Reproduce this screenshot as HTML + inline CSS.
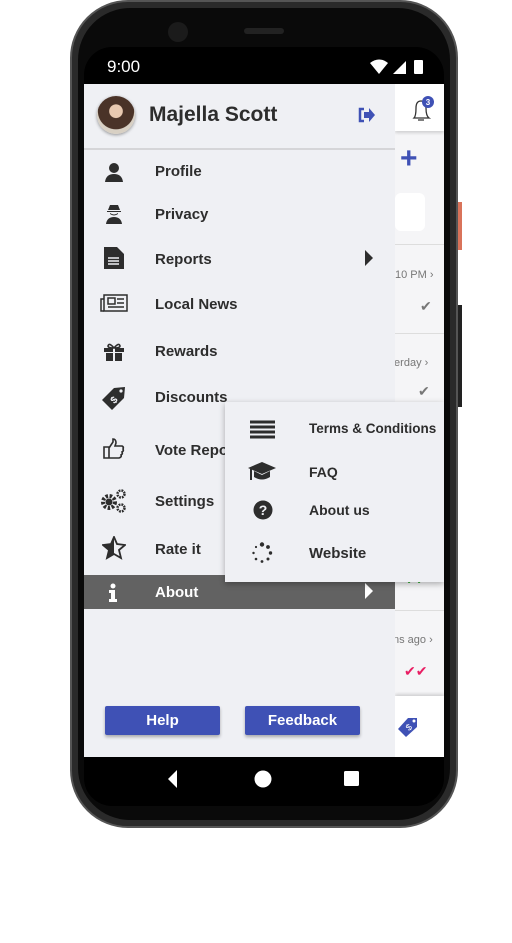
<!DOCTYPE html>
<html><head><style>
*{margin:0;padding:0;box-sizing:border-box}
body{width:512px;height:943px;background:#fff;position:relative;overflow:hidden;font-family:"Liberation Sans",sans-serif}
.abs{position:absolute}
.phone{left:70px;top:0;width:388px;height:828px;border-radius:58px;background:#2a2a2a;border:2px solid #555}
.inner{left:78px;top:8px;width:372px;height:812px;border-radius:52px;background:#0a0a0a}
.screen{left:84px;top:47px;width:360px;height:759px;background:#000;border-radius:28px;overflow:hidden}
.drawer{left:84px;top:84px;width:311px;height:673px;background:#eff0f4}
.item{position:absolute;left:0;width:311px;font-weight:bold;font-size:15px;color:#2d2d2d}
.item span{position:absolute;left:71px;top:2px}
.ic{position:absolute;left:16px}
.sub{left:225px;top:402px;width:219px;height:180px;background:#eff0f4;box-shadow:0 2px 6px rgba(0,0,0,.3)}
.sub div{position:absolute;left:84px;font-weight:bold;font-size:14px;color:#2d2d2d}
.btn{position:absolute;top:706px;width:115px;height:29px;background:#3f51b5;color:#fff;font-weight:bold;font-size:15px;text-align:center;line-height:29px;border-radius:2px;box-shadow:0 2px 3px rgba(0,0,0,.3)}
</style></head><body>
<div class="abs phone"></div>
<div class="abs inner"></div>
<div class="abs" style="left:458px;top:202px;width:4px;height:48px;background:#d9735a"></div>
<div class="abs" style="left:458px;top:305px;width:4px;height:102px;background:#222"></div>
<div class="abs" style="left:168px;top:22px;width:20px;height:20px;border-radius:50%;background:#1b1b1b"></div>
<div class="abs" style="left:244px;top:28px;width:40px;height:6px;border-radius:3px;background:#222"></div>
<div class="abs screen"></div>
<div class="abs" style="left:107px;top:57px;color:#fff;font-size:17px">9:00</div>
<svg class="abs" style="left:370px;top:58px" width="58" height="18"><path d="M0 5 Q9 -2 18 5 L9 16Z" fill="#fff"/><path d="M23 16 L36 3 L36 16Z" fill="#fff"/><rect x="44" y="2" width="9" height="14" rx="1" fill="#fff"/></svg>
<div class="abs" style="left:395px;top:84px;width:49px;height:673px;background:#f5f5f7"></div>
<div class="abs" style="left:395px;top:84px;width:49px;height:47px;background:#fff;box-shadow:0 2px 3px rgba(0,0,0,.15)"></div>
<svg class="abs" style="left:408px;top:96px" width="30" height="26"><path d="M6 22 Q8 20 8 12 Q8 5 13 5 Q18 5 18 12 Q18 20 21 22Z M10 24 L16 24" fill="none" stroke="#333" stroke-width="1.3"/><circle cx="20" cy="6" r="6" fill="#3f51b5"/><text x="20" y="9" font-size="8" fill="#fff" text-anchor="middle" font-weight="bold" font-family="Liberation Sans">3</text></svg>
<div class="abs" style="left:400px;top:144px;color:#3f51b5;font-size:30px;font-weight:bold;line-height:30px">+</div>
<div class="abs" style="left:395px;top:193px;width:30px;height:38px;background:#fff;border-radius:6px"></div>
<div class="abs" style="left:395px;top:244px;width:49px;height:1px;background:#ddd"></div>
<div class="abs" style="left:395px;top:269px;font-size:11px;color:#777">10 PM ›</div>
<div class="abs" style="left:420px;top:298px;font-size:14px;color:#777">✔</div>
<div class="abs" style="left:395px;top:333px;width:49px;height:1px;background:#ddd"></div>
<div class="abs" style="left:391px;top:357px;font-size:11px;color:#777">terday ›</div>
<div class="abs" style="left:418px;top:383px;font-size:14px;color:#777">✔</div>
<div class="abs" style="left:406px;top:573px;font-size:12px;color:#2a2">✔✔</div>
<div class="abs" style="left:395px;top:610px;width:49px;height:1px;background:#ddd"></div>
<div class="abs" style="left:393px;top:634px;font-size:11px;color:#777">ns ago ›</div>
<div class="abs" style="left:404px;top:663px;font-size:14px;color:#e91e63">✔✔</div>
<div class="abs" style="left:395px;top:696px;width:49px;height:61px;background:#fff;box-shadow:0 -2px 3px rgba(0,0,0,.15)"></div>
<svg class="abs" style="left:396px;top:715px" width="24" height="24"><path d="M2 14 L12 3 L21 3 L21 12 L10 22Z" fill="#3f51b5"/><circle cx="18" cy="6" r="1.5" fill="#fff"/><text x="11" y="17" font-size="9" fill="#fff" font-family="Liberation Sans" transform="rotate(-40 11 14)">$</text></svg>
<div class="abs drawer"></div>
<div class="abs" style="left:97px;top:96px;width:38px;height:38px;border-radius:50%;background:radial-gradient(circle at 50% 40%,#e8c9b0 0 22%,#4a3328 24% 60%,#d8d0c4 62%);box-shadow:0 1px 3px rgba(0,0,0,.4)"></div>
<div class="abs" style="left:149px;top:103px;font-size:21px;font-weight:bold;color:#2d2d2d">Majella Scott</div>
<svg class="abs" style="left:358px;top:107px" width="18" height="16"><path d="M6 2 H2 V14 H6" fill="none" stroke="#3f51b5" stroke-width="2.5"/><path d="M6 5 H11 V1 L17 8 L11 15 V11 H6Z" fill="#3f51b5"/></svg>
<div class="abs" style="left:84px;top:148px;width:311px;height:2px;background:#d5d5d8"></div>
<div class="abs" style="left:84px;top:0;width:311px;height:0">
<div class="item" style="top:161px"><svg class="ic" style="left:20px;top:1px" width="20" height="20"><circle cx="10" cy="6" r="5" fill="#2d2d2d"/><path d="M1 20 Q2 12 10 12 Q18 12 19 20Z" fill="#2d2d2d"/></svg><span>Profile</span></div>
<div class="item" style="top:204px"><svg class="ic" style="left:20px;top:0" width="20" height="20"><path d="M4 6 L6 1 L14 1 L16 6Z M3 7 H17 V8 H3Z M6 9 Q10 12 14 9 V10 Q10 13 6 10Z M2 20 Q3 13 10 13 Q17 13 18 20Z" fill="#2d2d2d"/></svg><span>Privacy</span></div>
<div class="item" style="top:249px"><svg class="ic" style="left:19px;top:-3px" width="22" height="24"><path d="M1 1 H14 L21 8 V23 H1Z" fill="#2d2d2d"/><path d="M5 12 H16 M5 15 H16 M5 18 H16" stroke="#eff0f4" stroke-width="1.4"/></svg><span>Reports</span><svg class="abs" style="left:280px;top:1px" width="10" height="16"><path d="M1 0 L9 8 L1 16Z" fill="#2d2d2d"/></svg></div>
<div class="item" style="top:294px"><svg class="ic" style="top:-1px" width="28" height="20"><rect x="4" y="2" width="23" height="16" fill="none" stroke="#2d2d2d" stroke-width="1.5"/><path d="M4 6 H1 V18 H4" fill="none" stroke="#2d2d2d" stroke-width="1.5"/><rect x="8" y="5" width="7" height="6" fill="none" stroke="#2d2d2d" stroke-width="1.5"/><path d="M17 6 H24 M17 10 H24 M8 14 H24" stroke="#2d2d2d" stroke-width="1.5"/></svg><span>Local News</span></div>
<div class="item" style="top:341px"><svg class="ic" style="left:19px;top:1px" width="22" height="20"><path d="M1 6 H21 V10 H1Z M3 11 H19 V19 H3Z" fill="#2d2d2d"/><path d="M11 6 V19" stroke="#eff0f4" stroke-width="2"/><path d="M11 6 Q6 0 5 4 Q5 6 11 6 Q16 0 17 4 Q17 6 11 6" fill="none" stroke="#2d2d2d" stroke-width="1.6"/></svg><span>Rewards</span></div>
<div class="item" style="top:387px"><svg class="ic" style="left:17px;top:-2px" width="26" height="26"><path d="M1 15 L13 3 L24 2 L23 13 L11 25Z" fill="#2d2d2d"/><circle cx="20" cy="6" r="1.6" fill="#eff0f4"/><text x="10" y="19" font-size="10" fill="#eff0f4" font-family="Liberation Sans" transform="rotate(-45 12 15)">$</text></svg><span>Discounts</span></div>
<div class="item" style="top:440px"><svg class="ic" style="left:19px;top:-2px" width="22" height="22"><path d="M1 9 H6 V20 H1Z M6 10 L10 4 V1 Q13 1 13 5 L12 8 H19 Q21 9 20 11 Q21 13 19 14 Q20 16 18 17 Q19 19 16 20 H6" fill="none" stroke="#2d2d2d" stroke-width="1.6"/></svg><span>Vote Repo</span></div>
<div class="item" style="top:491px"><svg class="ic" style="top:-3px" width="28" height="26"><circle cx="9" cy="14" r="6" fill="none" stroke="#2d2d2d" stroke-width="4" stroke-dasharray="2.5 1.6"/><circle cx="9" cy="14" r="3.5" fill="#2d2d2d"/><circle cx="21" cy="6" r="3.5" fill="none" stroke="#2d2d2d" stroke-width="2.5" stroke-dasharray="1.8 1"/><circle cx="21" cy="20" r="3.5" fill="none" stroke="#2d2d2d" stroke-width="2.5" stroke-dasharray="1.8 1"/></svg><span>Settings</span></div>
<div class="item" style="top:539px"><svg class="ic" style="left:18px;top:-3px" width="24" height="24"><path d="M12 1 L15 8 L23 9 L17 14 L19 22 L12 18 L5 22 L7 14 L1 9 L9 8Z" fill="none" stroke="#2d2d2d" stroke-width="1.8"/><path d="M12 1 L9 8 L1 9 L7 14 L5 22 L12 18Z" fill="#2d2d2d"/></svg><span>Rate it</span></div>
<div style="position:absolute;left:0;top:575px;width:311px;height:34px;background:#626262"></div>
<div class="item" style="top:582px;color:#fff"><svg class="ic" style="left:24px;top:1px" width="12" height="20"><circle cx="5" cy="3" r="2.5" fill="#fff"/><path d="M1 7 H7 V16 H9 V19 H1 V16 H3 V10 H1Z" fill="#fff"/></svg><span>About</span><svg class="abs" style="left:280px;top:1px" width="10" height="16"><path d="M1 0 L9 8 L1 16Z" fill="#fff"/></svg></div>
</div>
<div class="btn" style="left:105px">Help</div>
<div class="btn" style="left:245px">Feedback</div>
<div class="abs sub">
<svg class="abs" style="left:25px;top:18px" width="25" height="19"><path d="M0 2 H25 M0 7 H25 M0 12 H25 M0 17 H25" stroke="#2d2d2d" stroke-width="3"/></svg>
<div style="top:19px;font-size:13.5px">Terms &amp; Conditions</div>
<svg class="abs" style="left:22px;top:59px" width="30" height="22"><path d="M15 1 L29 7 L15 13 L1 7Z" fill="#2d2d2d"/><path d="M7 10 V16 Q15 21 23 16 V10 L15 14Z" fill="#2d2d2d"/><path d="M4 8 V19" stroke="#2d2d2d" stroke-width="2"/></svg>
<div style="top:62px">FAQ</div>
<svg class="abs" style="left:28px;top:98px" width="20" height="20"><circle cx="10" cy="10" r="9.5" fill="#2d2d2d"/><text x="10" y="15" font-size="14" font-weight="bold" fill="#eff0f4" text-anchor="middle" font-family="Liberation Sans">?</text></svg>
<div style="top:100px">About us</div>
<svg class="abs" style="left:26px;top:140px" width="22" height="22"><g fill="#2d2d2d"><circle cx="11" cy="2.5" r="2.2"/><circle cx="17" cy="5" r="1.9"/><circle cx="19.5" cy="11" r="1.7"/><circle cx="17" cy="17" r="1.5"/><circle cx="11" cy="19.5" r="1.4"/><circle cx="5" cy="17" r="1.3"/><circle cx="2.5" cy="11" r="1.2"/><circle cx="5" cy="5" r="1.1"/></g></svg>
<div style="top:143px;font-size:15px">Website</div>
</div>
<svg class="abs" style="left:166px;top:768px" width="200" height="22"><path d="M2 11 L11 2 V20Z" fill="#fff"/><circle cx="97" cy="11" r="8.5" fill="#fff"/><rect x="178" y="3" width="15" height="15" rx="1.5" fill="#fff"/></svg>
</body></html>
